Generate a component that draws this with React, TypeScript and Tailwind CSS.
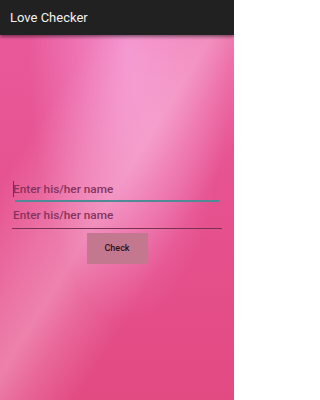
export default function App() {
  return (
    <div className="w-[234px] h-[400px] flex flex-col overflow-hidden font-['Roboto',sans-serif]">
      <header className="h-[35px] shrink-0 bg-[#212121] flex items-center px-[10px] shadow-[0_2px_3px_rgba(0,0,0,0.45)] relative z-10">
        <span className="text-[#f2f2f2] text-[13px] leading-none">Love Checker</span>
      </header>
      <main className="flex-1 flex flex-col px-[12px] pt-[141px] bg-[linear-gradient(122deg,transparent_20%,rgba(255,214,236,0.25)_36%,rgba(255,222,240,0.36)_46%,rgba(255,214,236,0.2)_54%,transparent_66%),radial-gradient(ellipse_at_55%_5%,rgba(244,146,208,0.95)_0%,rgba(244,146,208,0)_55%),linear-gradient(180deg,#e9599a_0%,#e24a82_100%)]">
        <label className="relative flex items-center h-[24px] pt-[3px]">
          <span className="absolute left-[1px] top-[5px] w-[1px] h-[16px] bg-[#7a2a55]" />
          <input
            placeholder="Enter his/her name"
            className="w-full bg-transparent outline-none pl-[1px] text-[11.8px] font-medium text-[#7a2a55] placeholder:text-[#86335f]"
          />
        </label>
        <div className="h-[2px] mx-[3px] bg-[#4f8a96]" />
        <label className="flex items-center h-[24px] mt-[2px]">
          <input
            placeholder="Enter his/her name"
            className="w-full bg-transparent outline-none pl-[1px] text-[11.8px] font-medium text-[#7a2a55] placeholder:text-[#86335f]"
          />
        </label>
        <div className="h-[1px] bg-[#7a3050]" />
        <div className="flex justify-center mt-[4px]">
          <button className="w-[61px] h-[31px] bg-[#c47890] text-[#2a1019] text-[9px] font-medium">Check</button>
        </div>
      </main>
    </div>
  );
}
